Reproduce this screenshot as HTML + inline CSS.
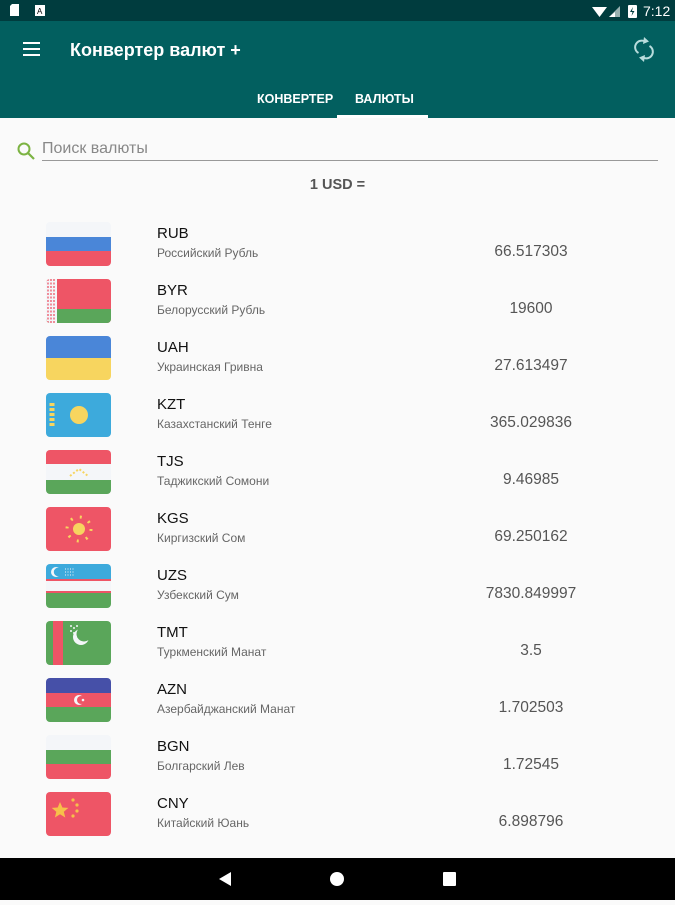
<!DOCTYPE html>
<html><head><meta charset="utf-8"><style>
*{margin:0;padding:0;box-sizing:border-box}
body{width:675px;height:900px;overflow:hidden;background:#fafafa;font-family:"Liberation Sans","DejaVu Sans",sans-serif;position:relative}
.sb{position:absolute;left:0;top:0;width:675px;height:21px;background:#003c3e;color:#fff}
.ab{position:absolute;left:0;top:21px;width:675px;height:97px;background:#025f5f}
.title{position:absolute;left:70px;top:19px;color:#fff;font-size:18px;font-weight:bold}
.tab{position:absolute;top:71px;color:#fff;font-size:12.5px;font-weight:bold}
.ind{position:absolute;left:337px;top:94px;width:91px;height:3px;background:#fff}
.search{position:absolute;left:42px;top:140px;width:616px;height:21px;border-bottom:1px solid #999;color:#888;font-size:16px}
.usd{position:absolute;left:0;width:675px;top:177px;text-align:center;font-weight:bold;color:#555;font-size:14.5px}
.row{position:absolute;left:0;width:675px;height:57px}
.row svg{position:absolute;left:46px;top:0}
.code{position:absolute;left:157px;top:3px;font-size:15px;color:#111}
.name{position:absolute;left:157px;top:24px;font-size:12px;color:#666}
.val{position:absolute;left:431px;width:200px;text-align:center;top:21px;font-size:15.5px;color:#555}
.nav{position:absolute;left:0;top:858px;width:675px;height:42px;background:#000}
</style></head><body>
<div class="sb">
<svg width="675" height="21" style="position:absolute;left:0;top:0">
<path d="M12 4h7v12h-9v-10z" fill="#fff"/>
<rect x="35" y="5" width="10" height="11" fill="#fff"/><text x="37" y="14" font-size="8" fill="#000" font-family="Liberation Sans">A</text>
<path d="M592 7 L607 7 L599.5 17Z" fill="#fff"/>
<path d="M620 6 L620 17 L609 17Z" fill="#fff" opacity=".6"/><path d="M615 12 L615 17 L609 17Z" fill="#fff"/>
<rect x="628" y="5" width="9" height="13" rx="1" fill="#fff"/>
<path d="M633 7 l-3 5h2.5l-1 4 3-5h-2.5z" fill="#003c3e"/>
<text x="643" y="16" font-size="14" fill="#fff" font-family="Liberation Sans">7:12</text>
</svg>
</div>
<div class="ab">
<svg width="675" height="60" style="position:absolute;left:0;top:0">
<rect x="23" y="21" width="17" height="2" fill="#fff"/><rect x="23" y="27" width="17" height="2" fill="#fff"/><rect x="23" y="33" width="17" height="2" fill="#fff"/>
<g fill="none" stroke="#b8dcdc" stroke-width="2">
<path d="M638.5 32 A6 6 0 0 1 645 20.5"/><path d="M649.5 25 A6 6 0 0 1 643 36.5"/></g>
<path d="M644 16 L649 20.5 L643 23Z" fill="#b8dcdc"/><path d="M644 41 L639 36.5 L645 34Z" fill="#b8dcdc"/>
</svg>
<div class="title">Конвертер валют +</div>
<div class="tab" style="left:257px">КОНВЕРТЕР</div>
<div class="tab" style="left:355px">ВАЛЮТЫ</div>
<div class="ind"></div>
</div>
<svg width="24" height="24" style="position:absolute;left:15px;top:140px"><circle cx="9" cy="9" r="5.5" fill="none" stroke="#7cb342" stroke-width="2"/><path d="M13 13 L19 19" stroke="#7cb342" stroke-width="2.2"/></svg>
<div class="search">Поиск валюты</div>
<div class="usd">1 USD =</div>

<div class="row" style="top:222px"><svg width="65" height="44"><defs><clipPath id="c"><rect width="65" height="44" rx="4"/></clipPath></defs><g clip-path="url(#c)"><rect width="65" height="15" fill="#f4f6f9"/><rect y="15" width="65" height="15" fill="#4a86d8"/><rect y="29" width="65" height="15" fill="#ee5566"/></g></svg><div class="code">RUB</div><div class="name">Российский Рубль</div><div class="val">66.517303</div></div>

<div class="row" style="top:279px"><svg width="65" height="44"><g clip-path="url(#c)"><rect width="65" height="44" fill="#ee5566"/><rect y="30" width="65" height="14" fill="#5aa65a"/><rect width="11" height="44" fill="#f4f6f9"/><path d="M2 0v44M5 0v44M8 0v44" stroke="#ee5566" stroke-width="1.3" stroke-dasharray="2 1.5"/></g></svg><div class="code">BYR</div><div class="name">Белорусский Рубль</div><div class="val">19600</div></div>

<div class="row" style="top:336px"><svg width="65" height="44"><g clip-path="url(#c)"><rect width="65" height="22" fill="#4a86d8"/><rect y="22" width="65" height="22" fill="#f7d55f"/></g></svg><div class="code">UAH</div><div class="name">Украинская Гривна</div><div class="val">27.613497</div></div>

<div class="row" style="top:393px"><svg width="65" height="44"><g clip-path="url(#c)"><rect width="65" height="44" fill="#3daadc"/><circle cx="33" cy="22" r="9" fill="#f7d55f"/><path d="M6 10v25" stroke="#f7d55f" stroke-width="5" stroke-dasharray="3 2"/></g></svg><div class="code">KZT</div><div class="name">Казахстанский Тенге</div><div class="val">365.029836</div></div>

<div class="row" style="top:450px"><svg width="65" height="44"><g clip-path="url(#c)"><rect width="65" height="14" fill="#ee5566"/><rect y="14" width="65" height="16" fill="#f4f6f9"/><rect y="30" width="65" height="14" fill="#5aa65a"/><path d="M24 26l5-4 4-3 4 3 5 4" stroke="#f7d55f" stroke-width="2" fill="none" stroke-dasharray="2 2"/></g></svg><div class="code">TJS</div><div class="name">Таджикский Сомони</div><div class="val">9.46985</div></div>

<div class="row" style="top:507px"><svg width="65" height="44"><g clip-path="url(#c)"><rect width="65" height="44" fill="#ee5566"/><circle cx="33" cy="22" r="6" fill="#f7d55f"/><circle cx="33" cy="22" r="12" fill="none" stroke="#f7d55f" stroke-width="3" stroke-dasharray="2 7.5"/></g></svg><div class="code">KGS</div><div class="name">Киргизский Сом</div><div class="val">69.250162</div></div>

<div class="row" style="top:564px"><svg width="65" height="44"><g clip-path="url(#c)"><rect width="65" height="15" fill="#3daadc"/><rect y="15" width="65" height="2" fill="#ee5566"/><rect y="17" width="65" height="10" fill="#f4f6f9"/><rect y="27" width="65" height="2" fill="#ee5566"/><rect y="29" width="65" height="15" fill="#5aa65a"/><circle cx="10" cy="8" r="5" fill="#f4f6f9"/><circle cx="12" cy="8" r="4.2" fill="#3daadc"/><path d="M19 5h10M19 8h10M19 11h10" stroke="#f4f6f9" stroke-dasharray="1 1.5"/></g></svg><div class="code">UZS</div><div class="name">Узбекский Сум</div><div class="val">7830.849997</div></div>

<div class="row" style="top:621px"><svg width="65" height="44"><g clip-path="url(#c)"><rect width="65" height="44" fill="#5aa65a"/><rect x="7" width="10" height="44" fill="#ee5566"/><circle cx="35" cy="16" r="8" fill="#f4f6f9"/><circle cx="38" cy="13" r="7.5" fill="#5aa65a"/><circle cx="28" cy="7" r="1" fill="#f4f6f9"/><circle cx="25" cy="10" r="1" fill="#f4f6f9"/><circle cx="28" cy="12" r="1" fill="#f4f6f9"/><circle cx="31" cy="5" r="1" fill="#f4f6f9"/><circle cx="25" cy="5" r="1" fill="#f4f6f9"/></g></svg><div class="code">TMT</div><div class="name">Туркменский Манат</div><div class="val">3.5</div></div>

<div class="row" style="top:678px"><svg width="65" height="44"><g clip-path="url(#c)"><rect width="65" height="15" fill="#4650a8"/><rect y="15" width="65" height="15" fill="#ee5566"/><rect y="29" width="65" height="15" fill="#5aa65a"/><circle cx="33" cy="22" r="5" fill="#f4f6f9"/><circle cx="35" cy="22" r="4" fill="#ee5566"/><circle cx="37" cy="22" r="1.3" fill="#f4f6f9"/></g></svg><div class="code">AZN</div><div class="name">Азербайджанский Манат</div><div class="val">1.702503</div></div>

<div class="row" style="top:735px"><svg width="65" height="44"><g clip-path="url(#c)"><rect width="65" height="15" fill="#f4f6f9"/><rect y="15" width="65" height="15" fill="#5aa65a"/><rect y="29" width="65" height="15" fill="#ee5566"/></g></svg><div class="code">BGN</div><div class="name">Болгарский Лев</div><div class="val">1.72545</div></div>

<div class="row" style="top:792px"><svg width="65" height="44"><g clip-path="url(#c)"><rect width="65" height="44" fill="#ee5566"/><path d="M14 10l2.4 5.5 6 .4-4.6 3.8 1.5 5.8-5.3-3.2-5.1 3.2 1.4-5.8-4.6-3.8 6-.4z" fill="#f7c04a"/><circle cx="27" cy="8" r="1.6" fill="#f7c04a"/><circle cx="31" cy="13" r="1.6" fill="#f7c04a"/><circle cx="31" cy="19" r="1.6" fill="#f7c04a"/><circle cx="27" cy="24" r="1.6" fill="#f7c04a"/></g></svg><div class="code">CNY</div><div class="name">Китайский Юань</div><div class="val">6.898796</div></div>

<div class="nav"><svg width="675" height="42"><path d="M231 14v14l-12-7z" fill="#fff"/><circle cx="337" cy="21" r="7" fill="#fff"/><rect x="443" y="14" width="13" height="14" rx="1" fill="#fff"/></svg></div>
</body></html>
